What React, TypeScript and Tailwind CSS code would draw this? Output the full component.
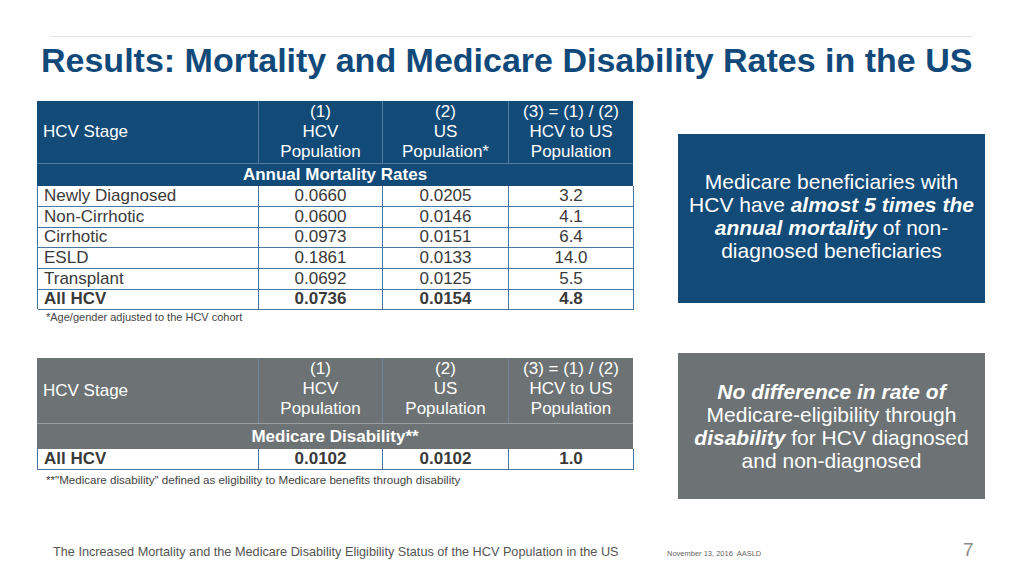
import React from 'react';

type Row = { stage: string; hcv: string; us: string; ratio: string; bold?: boolean; h: string };

const mortality: Row[] = [
  { stage: 'Newly Diagnosed', hcv: '0.0660', us: '0.0205', ratio: '3.2', h: 'h-[21px]' },
  { stage: 'Non-Cirrhotic', hcv: '0.0600', us: '0.0146', ratio: '4.1', h: 'h-[20px]' },
  { stage: 'Cirrhotic', hcv: '0.0973', us: '0.0151', ratio: '6.4', h: 'h-[21px]' },
  { stage: 'ESLD', hcv: '0.1861', us: '0.0133', ratio: '14.0', h: 'h-[21px]' },
  { stage: 'Transplant', hcv: '0.0692', us: '0.0125', ratio: '5.5', h: 'h-[20px]' },
  { stage: 'All HCV', hcv: '0.0736', us: '0.0154', ratio: '4.8', bold: true, h: 'h-[20px]' },
];

const cols = 'grid grid-cols-[221px_124px_126px_125px]';

const HeaderCell: React.FC<{ lines: string[] }> = ({ lines }) => (
  <div className="border-l border-[#6f8fb0]/70 flex flex-col items-center pt-[1px]">
    {lines.map((l) => (
      <span key={l}>{l}</span>
    ))}
  </div>
);

const TableHeader: React.FC<{ bg: string; h: string; subH: string; sub: string; usLabel: string; divider: string }> = ({
  bg,
  h,
  subH,
  sub,
  usLabel,
  divider,
}) => (
  <div className={`${bg} text-white text-[17px] leading-[20px]`}>
    <div className={`${cols} ${h}`}>
      <div className="flex items-center pl-[6px]">HCV Stage</div>
      <HeaderCell lines={['(1)', 'HCV', 'Population']} />
      <HeaderCell lines={['(2)', 'US', usLabel]} />
      <HeaderCell lines={['(3) = (1) / (2)', 'HCV to US', 'Population']} />
    </div>
    <div className={`${subH} border-t ${divider} flex items-center justify-center font-bold`}>{sub}</div>
  </div>
);

const DataRow: React.FC<{ row: Row }> = ({ row }) => (
  <div className={`${cols} ${row.h} text-[17px] leading-[20px] text-[#3a3a3a] ${row.bold ? 'font-bold' : ''}`}>
    <div className="flex items-center pl-[6px] border-r border-b border-[#4a76a2]">{row.stage}</div>
    <div className="flex items-center justify-center border-r border-b border-[#4a76a2]">{row.hcv}</div>
    <div className="flex items-center justify-center border-r border-b border-[#4a76a2]">{row.us}</div>
    <div className="flex items-center justify-center border-r border-b border-[#4a76a2]">{row.ratio}</div>
  </div>
);

const App: React.FC = () => {
  return (
    <div className="w-[1024px] h-[576px] bg-white flex flex-col overflow-hidden font-['Liberation_Sans',Arial,sans-serif]">
      <div className="mt-[36px] ml-[50px] w-[922px] h-px bg-[#e4e4e4]" />
      <h1 className="mt-[3px] ml-[41px] text-[34px] leading-[40px] font-bold text-[#114a7a] whitespace-nowrap">
        Results: Mortality and Medicare Disability Rates in the US
      </h1>

      <div className="ml-[37px] mt-[21px] flex items-start">
        <div className="w-[596px]">
          <TableHeader
            bg="bg-[#124a78]"
            h="h-[62px]"
            subH="h-[23px]"
            sub="Annual Mortality Rates"
            usLabel="Population*"
            divider="border-[#6f8fb0]/70"
          />
          <div className="border-l border-[#4a76a2]">
            {mortality.map((r) => (
              <DataRow key={r.stage} row={r} />
            ))}
          </div>
          <p className="pl-[9px] pt-[1px] text-[11px] leading-[14px] text-[#444]">*Age/gender adjusted to the HCV cohort</p>
        </div>
        <div className="ml-[45px] mt-[33px] w-[307px] h-[169px] bg-[#124a78] text-white text-[21px] leading-[23px] text-center flex flex-col items-center justify-center pb-[6px] whitespace-nowrap">
          <span>Medicare beneficiaries with</span>
          <span>
            HCV have <b className="italic">almost 5 times the</b>
          </span>
          <span>
            <b className="italic">annual mortality</b> of non-
          </span>
          <span>diagnosed beneficiaries</span>
        </div>
      </div>

      <div className="ml-[37px] mt-[29px] flex items-start">
        <div className="w-[596px] mt-[5px]">
          <TableHeader
            bg="bg-[#6d7375]"
            h="h-[65px]"
            subH="h-[26px]"
            sub="Medicare Disability**"
            usLabel="Population"
            divider="border-[#9aa0a2]"
          />
          <div className="border-l border-[#4a76a2]">
            <div className={`${cols} h-[21px] text-[17px] leading-[20px] text-[#3a3a3a] font-bold`}>
              <div className="flex items-center pl-[6px] border-r border-b border-[#4a76a2]">All HCV</div>
              <div className="flex items-end justify-center border-r border-b border-[#4a76a2]">0.0102</div>
              <div className="flex items-end justify-center border-r border-b border-[#4a76a2]">0.0102</div>
              <div className="flex items-center justify-center border-r border-b border-[#4a76a2]">1.0</div>
            </div>
          </div>
          <p className="pl-[9px] pt-[3px] text-[11.6px] leading-[14px] text-[#444]">
            **"Medicare disability" defined as eligibility to Medicare benefits through disability
          </p>
        </div>
        <div className="ml-[45px] w-[307px] h-[146px] bg-[#6d7375] text-white text-[21px] leading-[23px] text-center flex flex-col items-center justify-center whitespace-nowrap">
          <b className="italic">No difference in rate of</b>
          <span>Medicare-eligibility through</span>
          <span>
            <b className="italic">disability</b> for HCV diagnosed
          </span>
          <span>and non-diagnosed</span>
        </div>
      </div>

      <div className="mt-auto mb-[16px] flex items-baseline pl-[53px] text-[#555]">
        <span className="w-[614px] text-[12.7px] leading-[14px] whitespace-nowrap">
          The Increased Mortality and the Medicare Disability Eligibility Status of the HCV Population in the US
        </span>
        <span className="w-[296px] text-[7.5px] leading-[10px] text-[#666]">November 13, 2016&nbsp; AASLD</span>
        <span className="text-[19px] leading-[20px] text-[#8a8a8a]">7</span>
      </div>
    </div>
  );
};

export default App;
